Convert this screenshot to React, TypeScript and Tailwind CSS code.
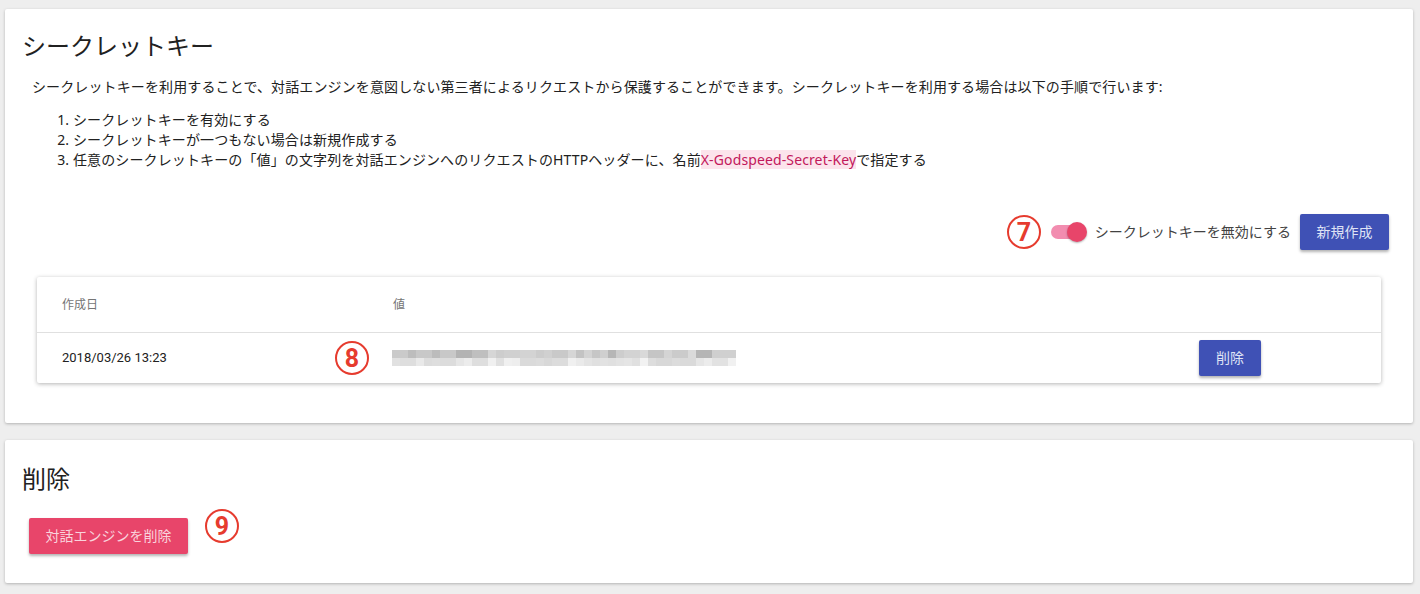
import React from "react";

const FONT = { fontFamily: "Roboto, 'Noto Sans CJK JP', sans-serif" };
const JP = { fontFamily: "'Noto Sans', 'Noto Sans CJK JP', sans-serif" };

// mosaic colours for the masked secret value (top / bottom pixel rows)
const topRow = [
  "#cacaca", "#cacaca", "#bdbdbd", "#c8c8c8", "#c8c8c8", "#bcbcbc", "#c8c8c8", "#c8c8c8",
  "#b3b3b3", "#b3b3b3", "#bfbfbf", "#bfbfbf", "#d6d6d6", "#cdcdcd", "#d0d0d0", "#d0d0d0",
  "#d3d3d3", "#d3d3d3", "#cccccc", "#d0d0d0", "#c9c9c9", "#c9c9c9", "#d6d6d6", "#c3c3c3",
  "#d3d3d3", "#c6c6c6", "#cfcfcf", "#b6b6b6", "#cdcdcd", "#d3d3d3", "#d3d3d3", "#d9d9d9",
  "#c5c5c5", "#c5c5c5", "#d4d4d4", "#cbcbcb", "#cbcbcb", "#dadada", "#b5b5b5", "#b5b5b5",
  "#cfcfcf", "#d0d0d0", "#d0d0d0",
];
const bottomRow = [
  "#e1e1e1", "#dedede", "#dedede", "#e9e9e9", "#dcdcdc", "#dedede", "#dcdcdc", "#dcdcdc",
  "#e6e6e6", "#ececec", "#dedede", "#dedede", "#f0f0f0", "#e0e0e0", "#f0f0f0", "#eeeeee",
  "#dadada", "#dadada", "#dcdcdc", "#d8d8d8", "#dcdcdc", "#dcdcdc", "#f0f0f0", "#eaeaea",
  "#e4e4e4", "#e0e0e0", "#e2e2e2", "#e0e0e0", "#e3e3e3", "#e5e5e5", "#e0e0e0", "#f2f2f2",
  "#dddddd", "#d8d8d8", "#d8d8d8", "#dcdcdc", "#dadada", "#dadada", "#e6e6e6", "#ececec",
  "#e2e2e2", "#e2e2e2", "#f1f1f1",
];

function Marker({ n }: { n: string }) {
  return (
    <div className="flex h-[34px] w-[34px] items-center justify-center rounded-full border-2 border-[#e63b2e] text-[25px] leading-none font-bold text-[#e63b2e]">
      {n}
    </div>
  );
}

export default function App() {
  return (
    <div className="min-h-screen bg-[#eeeeee] pl-[5px] pr-[7px] pt-[9px] text-[#212121]" style={FONT}>
      {/* Secret key card */}
      <div className="rounded-[2px] bg-white pt-[22px] pb-[40px] shadow-[0_1px_3px_rgba(0,0,0,0.25)]">
        <h2 className="pl-[17px] text-[24px] leading-[32px] font-normal text-[#212121]">シークレットキー</h2>
        <div style={JP}>
          <p className="mt-[14px] pl-[27px] text-[14px] leading-[20px] tracking-[0.12px] text-[#212121]">
            シークレットキーを利用することで、対話エンジンを意図しない第三者によるリクエストから保護することができます。シークレットキーを利用する場合は以下の手順で行います:
          </p>
          <ol className="mt-[13px] list-decimal pl-[68px] text-[14px] leading-[20px] tracking-[0.12px] text-[#212121]">
            <li>シークレットキーを有効にする</li>
            <li>シークレットキーが一つもない場合は新規作成する</li>
            <li>
              任意のシークレットキーの「値」の文字列を対話エンジンへのリクエストのHTTPヘッダーに、名前
              <span className="bg-[#fce4ec] text-[#c2185b]">X-Godspeed-Secret-Key</span>で指定する
            </li>
          </ol>
        </div>

        <div className="mt-[44px] flex items-center justify-end pr-[24px]">
          <Marker n="7" />
          <div className="relative ml-[10px] mr-[8px] h-[20px] w-[36px]">
            <div className="absolute left-0 top-[3px] h-[14px] w-[34px] rounded-full bg-[#f28db0]" />
            <div className="absolute right-0 top-0 h-[20px] w-[20px] rounded-full bg-[#e8456a] shadow-[0_1px_2px_rgba(0,0,0,0.3)]" />
          </div>
          <span className="text-[14px] text-[#424242]">シークレットキーを無効にする</span>
          <button className="ml-[9px] h-[36px] w-[89px] rounded-[2px] bg-[#3f51b5] text-[14px] text-[#dfe3f5] shadow-[0_2px_3px_rgba(0,0,0,0.3)]">
            新規作成
          </button>
        </div>

        {/* table */}
        <div className="mx-[32px] mt-[27px] rounded-[2px] bg-white shadow-[0_1px_4px_rgba(0,0,0,0.3)]">
          <div className="flex h-[56px] items-center border-b border-[#e0e0e0] text-[12px] text-[#757575]">
            <div className="w-[356px] pl-[25px]">作成日</div>
            <div>値</div>
          </div>
          <div className="flex h-[50px] items-center text-[13px] text-[#212121]">
            <div className="w-[298px] pl-[25px]">2018/03/26 13:23</div>
            <div className="w-[57px]">
              <Marker n="8" />
            </div>
            <div className="flex w-[807px] flex-col">
              <div className="flex">
                {topRow.map((c, i) => (
                  <div key={i} className="h-[8px] w-[8px]" style={{ backgroundColor: c }} />
                ))}
              </div>
              <div className="flex">
                {bottomRow.map((c, i) => (
                  <div key={i} className="h-[8px] w-[8px]" style={{ backgroundColor: c }} />
                ))}
              </div>
            </div>
            <button className="h-[36px] w-[62px] rounded-[2px] bg-[#3f51b5] text-[14px] text-[#dfe3f5] shadow-[0_2px_3px_rgba(0,0,0,0.3)]">
              削除
            </button>
          </div>
        </div>
      </div>

      {/* Delete card */}
      <div className="mt-[17px] rounded-[2px] bg-white pt-[24px] pb-[29px] shadow-[0_1px_3px_rgba(0,0,0,0.25)]">
        <h2 className="pl-[17px] text-[24px] leading-[32px] font-normal text-[#212121]">削除</h2>
        <div className="mt-[22px] flex items-start pl-[24px]">
          <button className="h-[36px] w-[159px] rounded-[2px] bg-[#e8456a] text-[14px] text-[#f9d3dc] shadow-[0_2px_3px_rgba(0,0,0,0.3)]">
            対話エンジンを削除
          </button>
          <div className="ml-[17px] -mt-[9px]">
            <Marker n="9" />
          </div>
        </div>
      </div>
    </div>
  );
}
